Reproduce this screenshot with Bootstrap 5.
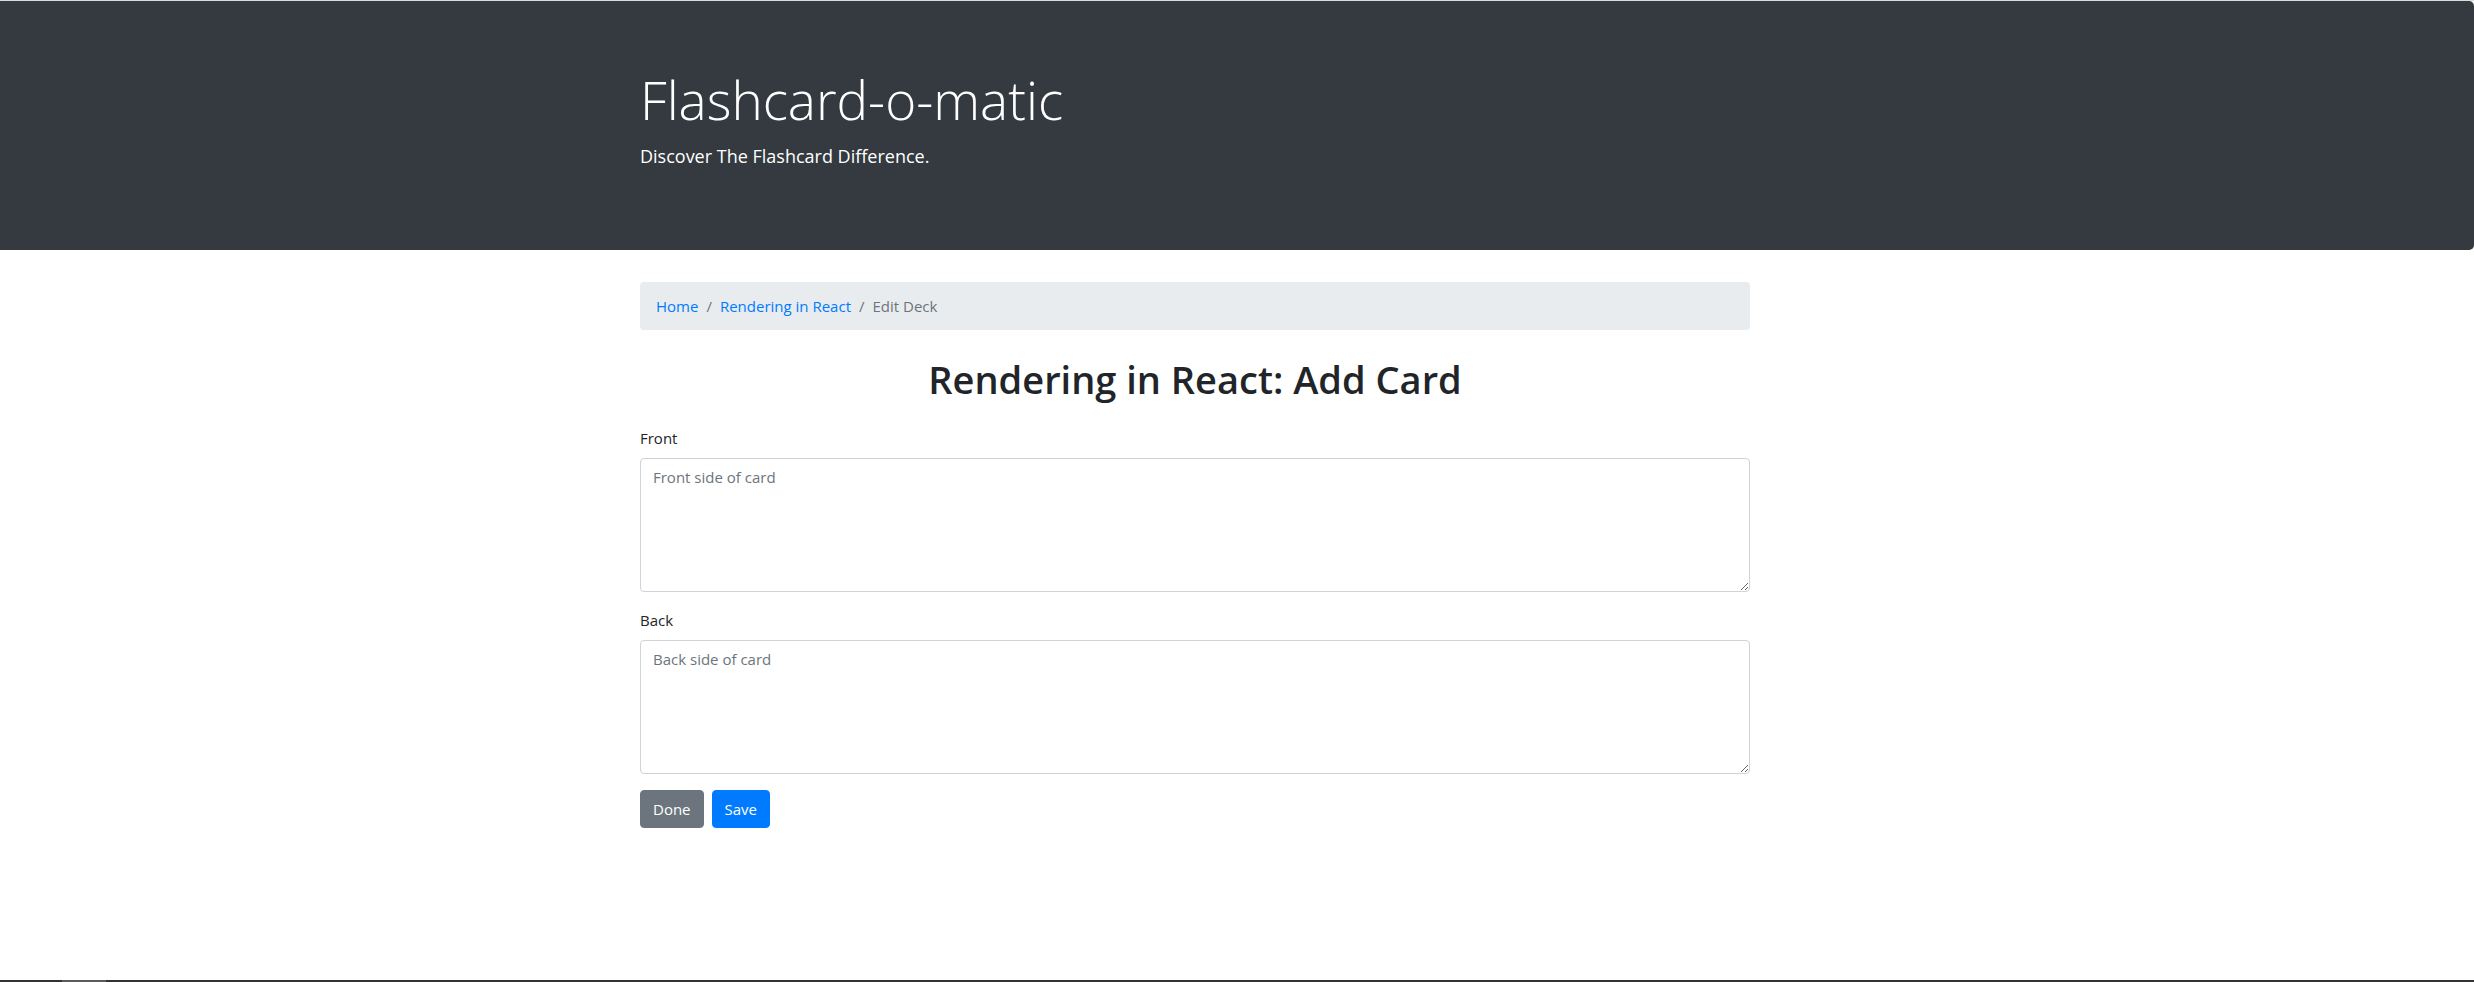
<!DOCTYPE html>
<html lang="en">
<head>
<meta charset="utf-8">
<meta name="viewport" content="width=device-width, initial-scale=1">
<title>Flashcard-o-matic</title>
<link href="https://cdn.jsdelivr.net/npm/bootstrap@5.3.0/dist/css/bootstrap.min.css" rel="stylesheet">
<style>
  body { font-family: "Open Sans", "Noto Sans", sans-serif; font-size: 15px; line-height: 24px; color: #212529; }
  .page { border-top: 1px solid #d5dedb; }
  .hero { background: #343a40; border-radius: 0 5px 5px 0; padding: 65px 84px 63px 0; margin-bottom: 32px; }
  .content { padding-right: 84px; }
  .column { max-width: 1110px; }
  .hero h1 { font-size: 53px; font-weight: 300; line-height: 67px; }
  .hero p { font-size: 18px; font-weight: 400; line-height: 30px; }
  .breadcrumb { --bs-breadcrumb-divider-color: #6c757d; --bs-breadcrumb-item-active-color: #6c757d; background: #e9ecef; border-radius: 4px; padding: 12px 16px; margin-bottom: 24px; }
  .breadcrumb a { color: #007bff; text-decoration: none; }
  .deck-title { font-size: 38px; font-weight: 600; line-height: 50px; margin-bottom: 22px; }
  .form-control { font-size: 15px; line-height: 24px; border-color: #ced4da; border-radius: 4px; height: 134px; }
  .form-control::placeholder { color: #6c757d; }
  .btn { font-size: 15px; line-height: 24px; border-radius: 4px; }
  .btn-primary { --bs-btn-bg: #007bff; --bs-btn-border-color: #007bff; }
  .taskbar { height: 2px; background: #333; padding-left: 62px; }
  .taskbar span { width: 44px; background: #5c5c5c; }
</style>
</head>
<body>
<div class="page">
  <header class="hero text-white">
    <div class="column mx-auto">
      <h1 class="mb-2">Flashcard-o-matic</h1>
      <p class="mb-3">Discover The Flashcard Difference.</p>
    </div>
  </header>
  <main class="content">
    <div class="column mx-auto">
      <nav aria-label="breadcrumb">
        <ol class="breadcrumb">
          <li class="breadcrumb-item"><a href="#">Home</a></li>
          <li class="breadcrumb-item"><a href="#">Rendering in React</a></li>
          <li class="breadcrumb-item active" aria-current="page">Edit Deck</li>
        </ol>
      </nav>
      <h2 class="deck-title text-center">Rendering in React: Add Card</h2>
      <form>
        <div class="mb-3">
          <label class="d-block mb-2" for="front">Front</label>
          <textarea class="form-control" id="front" placeholder="Front side of card"></textarea>
        </div>
        <div class="mb-3">
          <label class="d-block mb-2" for="back">Back</label>
          <textarea class="form-control" id="back" placeholder="Back side of card"></textarea>
        </div>
        <div class="d-flex gap-2">
          <button type="button" class="btn btn-secondary">Done</button>
          <button type="submit" class="btn btn-primary">Save</button>
        </div>
      </form>
    </div>
  </main>
</div>
<div class="taskbar fixed-bottom d-flex"><span></span></div>
<script src="https://cdn.jsdelivr.net/npm/bootstrap@5.3.0/dist/js/bootstrap.bundle.min.js"></script>
</body>
</html>
